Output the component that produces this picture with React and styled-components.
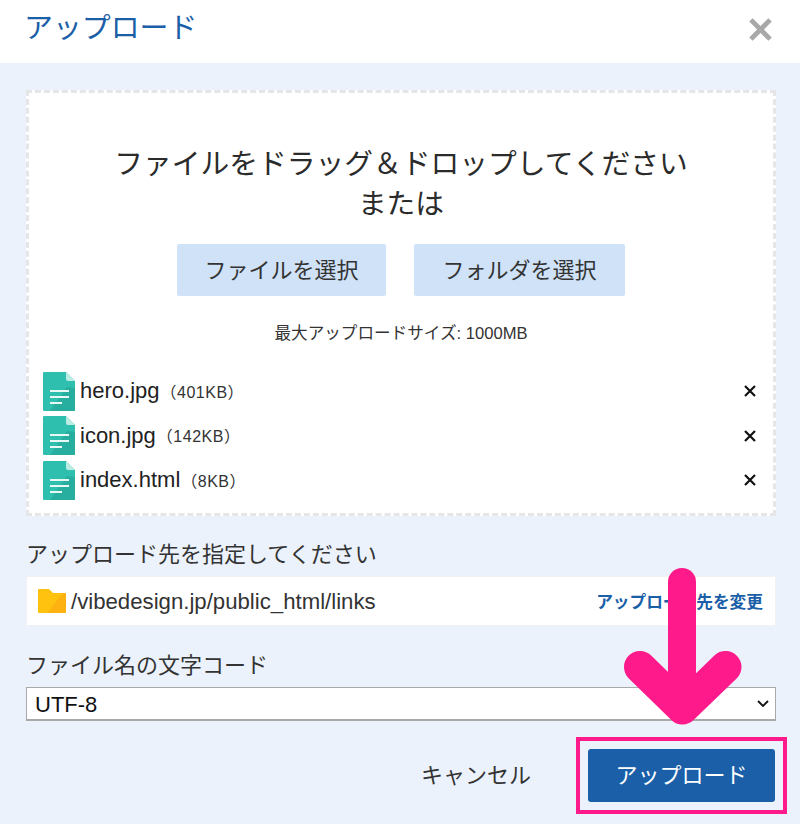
import React from 'react';
import styled, { createGlobalStyle } from 'styled-components';

const Global = createGlobalStyle`
  html, body { margin: 0; padding: 0; background: #ebf2fb; }
  * { box-sizing: border-box; }
  body { font-family: "Liberation Sans", "Noto Sans CJK JP", sans-serif; color: #333; }
`;
const Page = styled.div`
  position: relative; width: 800px; height: 824px; overflow: hidden;
  background: #ebf2fb; display: flex; flex-direction: column;
`;
const Header = styled.header`
  height: 63px; background: #fff; display: flex; align-items: center;
  justify-content: space-between; padding: 0 27px 7px 24px; flex: none;
`;
const Title = styled.h1`
  margin: 0; font-size: 28.9px; font-weight: 400; color: #1a5fa8; line-height: 36px;
`;
const Close = styled.button`
  border: 0; background: none; padding: 0; width: 26px; height: 26px; margin-top: 2px;
  display: flex; align-items: center; justify-content: center;
`;
const Main = styled.main`
  padding: 27px 24px 0 26px; display: flex; flex-direction: column;
`;
const Drop = styled.section`
  height: 426px; background: #fff; border: 3px dashed #e4e6e8;
  display: flex; flex-direction: column; align-items: center; padding-top: 51px;
`;
const Heading = styled.p`
  margin: 0; font-size: 28.75px; line-height: 40px; text-align: center; color: #2b2b2b;
`;
const Buttons = styled.div`
  display: flex; gap: 28px; margin-top: 20px; justify-content: center;
`;
const Pick = styled.button`
  height: 52px; width: ${p => p.$w}px; border: 0; border-radius: 2px; background: #cfe2f7;
  color: #333; font: inherit; font-size: 22px; padding: 0 0 5px;
`;
const Limit = styled.p`
  margin: 27px 0 0; font-size: 16.6px; line-height: 22px; color: #333;
`;
const Files = styled.ul`
  list-style: none; margin: 26px 0 0; padding: 0 16px 0 14px; width: 100%;
  display: flex; flex-direction: column; gap: 4.5px;
`;
const FileRow = styled.li`
  height: 40px; display: flex; align-items: center; gap: 5px;
`;
const FileName = styled.span`
  font-size: 22px; color: #222;
`;
const FileSize = styled.span`
  font-size: 16px; letter-spacing: 0.5px; color: #333; flex: 1; margin-bottom: 1px; margin-left: -4px;
`;
const Remove = styled.button`
  border: 0; background: none; padding: 0; width: 12px; height: 12px; display: flex; margin-right: 1px;
`;
const Label = styled.div`
  font-size: 22px; line-height: 30px; color: #333; margin-top: ${p => p.$top}px;
`;
const PathBox = styled.div`
  height: 50px; margin-top: 6px; background: #fff; border: 1px solid #f0f2f4;
  display: flex; align-items: center; padding: 0 12px 0 11px;
`;
const PathText = styled.span`
  font-size: 22.2px; color: #333; flex: 1; margin: 1px 0 0 5px;
`;
const ChangeLink = styled.a`
  font-size: 16.7px; font-weight: 700; color: #1a5fa8;
`;
const Select = styled.select`
  display: block; width: 750px; height: 34px; border: 1px solid #a9a9a9; border-bottom-width: 2px; border-radius: 0;
  background: #fff url("data:image/svg+xml;utf8,<svg xmlns='http://www.w3.org/2000/svg' width='12' height='7' viewBox='0 0 12 7'><path d='M1 1l5 5 5-5' fill='none' stroke='%23111' stroke-width='1.8'/></svg>") no-repeat right 6px center;
  appearance: none; font: inherit; font-size: 22px; color: #111; padding: 1px 8px 0; margin-top: 6px;
`;
const Footer = styled.footer`
  display: flex; justify-content: flex-end; align-items: center; margin-top: 16px; margin-right: -11px;
`;
const Cancel = styled.button`
  border: 0; background: none; padding: 0; font: inherit; font-size: 22px; color: #333;
  margin: 0 45px 5px 0;
`;
const Highlight = styled.div`
  width: 211px; height: 77px; border: 4px solid #ff1a8c; padding: 8px; display: flex;
`;
const Submit = styled.button`
  flex: 1; border: 0; border-radius: 3px; background: #1a5fa8; color: #fff;
  font: inherit; font-size: 22px; padding: 0 0 5px;
`;
const ArrowMark = styled.svg`
  position: absolute; left: 624px; top: 568px; width: 118px; height: 158px; pointer-events: none;
`;

const FileIcon = () => (
  <svg width="32" height="39" viewBox="0 0 32 39" style={{ flex: 'none' }}>
    <path d="M1 0h22l9 9v29a1 1 0 0 1-1 1H1a1 1 0 0 1-1-1V1a1 1 0 0 1 1-1z" fill="#2fbfae" />
    <path d="M32 16v22a1 1 0 0 1-1 1H7l17-24z" fill="#28ae9f" />
    <path d="M23 0l9 9h-7a2 2 0 0 1-2-2z" fill="#bdece5" />
    <path d="M7 18h19v2H7zM7 24h19v2H7zM7 30h12v2H7z" fill="#e8f8f5" />
  </svg>
);
const FolderIcon = () => (
  <svg width="28" height="24" viewBox="0 0 28 24" style={{ flex: 'none' }}>
    <path d="M0 1a1 1 0 0 1 1-1h10l4 4h12a1 1 0 0 1 1 1v18a1 1 0 0 1-1 1H1a1 1 0 0 1-1-1z" fill="#ffc20e" />
    <path d="M28 5v18a1 1 0 0 1-1 1H9L25 4h2a1 1 0 0 1 1 1z" fill="#fdb211" />
  </svg>
);
const Cross = ({ size, stroke, color }) => (
  <svg width={size} height={size} viewBox="0 0 24 24">
    <path d="M2 2L22 22M22 2L2 22" stroke={color} strokeWidth={stroke} fill="none" />
  </svg>
);

const files = [
  ['hero.jpg', '（401KB）'],
  ['icon.jpg', '（142KB）'],
  ['index.html', '（8KB）'],
];

export default function App() {
  return (
    <Page>
      <Global />
      <Header>
        <Title>アップロード</Title>
        <Close aria-label="閉じる"><Cross size={23} stroke={5} color="#a8a8a8" /></Close>
      </Header>
      <Main>
        <Drop>
          <Heading>ファイルをドラッグ＆ドロップしてください<br />または</Heading>
          <Buttons>
            <Pick $w={209}>ファイルを選択</Pick>
            <Pick $w={211}>フォルダを選択</Pick>
          </Buttons>
          <Limit>最大アップロードサイズ: 1000MB</Limit>
          <Files>
            {files.map(([n, s]) => (
              <FileRow key={n}>
                <FileIcon />
                <FileName>{n}</FileName>
                <FileSize>{s}</FileSize>
                <Remove aria-label="削除"><Cross size={12} stroke={4.4} color="#111" /></Remove>
              </FileRow>
            ))}
          </Files>
        </Drop>
        <Label $top={24}>アップロード先を指定してください</Label>
        <PathBox>
          <FolderIcon />
          <PathText>/vibedesign.jp/public_html/links</PathText>
          <ChangeLink>アップロード先を変更</ChangeLink>
        </PathBox>
        <Label $top={25}>ファイル名の文字コード</Label>
        <Select defaultValue="UTF-8"><option>UTF-8</option></Select>
        <Footer>
          <Cancel>キャンセル</Cancel>
          <Highlight><Submit>アップロード</Submit></Highlight>
        </Footer>
      </Main>
      <ArrowMark viewBox="0 0 118 158">
        <path d="M58 14V140" stroke="#ff1a8c" strokeWidth="28" strokeLinecap="round" fill="none" />
        <path d="M16 99L58.5 140.5L101.5 99" stroke="#ff1a8c" strokeWidth="32" strokeLinecap="round" strokeLinejoin="round" fill="none" />
      </ArrowMark>
    </Page>
  );
}
